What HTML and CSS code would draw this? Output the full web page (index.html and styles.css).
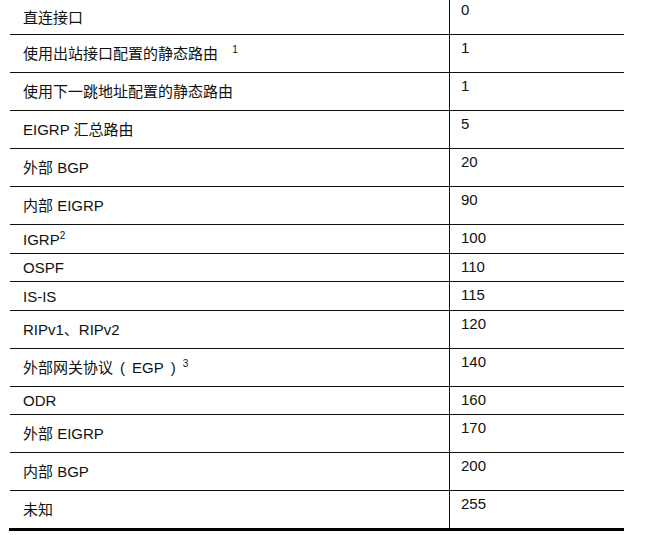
FILE: index.html
```html
<!DOCTYPE html>
<html lang="zh">
<head>
<meta charset="utf-8">
<link rel="stylesheet" href="styles.css">
</head>
<body>
<div class="table">
  <div class="row first"><div class="name">直连接口</div><div class="val">0</div></div>
  <div class="row tall"><div class="name"><span>使用出站接口配置的静态路由 <span class="sup gap">1</span></span></div><div class="val">1</div></div>
  <div class="row tall"><div class="name">使用下一跳地址配置的静态路由</div><div class="val">1</div></div>
  <div class="row tall"><div class="name">EIGRP 汇总路由</div><div class="val">5</div></div>
  <div class="row tall"><div class="name">外部 BGP</div><div class="val">20</div></div>
  <div class="row tall"><div class="name">内部 EIGRP</div><div class="val">90</div></div>
  <div class="row h28"><div class="name"><span>IGRP<span class="sup">2</span></span></div><div class="val">100</div></div>
  <div class="row h27"><div class="name">OSPF</div><div class="val">110</div></div>
  <div class="row h28"><div class="name">IS-IS</div><div class="val">115</div></div>
  <div class="row tall"><div class="name">RIPv1、RIPv2</div><div class="val">120</div></div>
  <div class="row tall"><div class="name"><span>外部网关协议<span class="paren">(</span>EGP<span class="paren">)</span><span class="sup">3</span></span></div><div class="val">140</div></div>
  <div class="row h27"><div class="name">ODR</div><div class="val">160</div></div>
  <div class="row tall"><div class="name">外部 EIGRP</div><div class="val">170</div></div>
  <div class="row tall"><div class="name">内部 BGP</div><div class="val">200</div></div>
  <div class="row tall last"><div class="name">未知</div><div class="val">255</div></div>
</div>
</body>
</html>
```
FILE: styles.css
```css
html, body {
  margin: 0;
  padding: 0;
  background: #fff;
}
body {
  font-family: "Liberation Sans", "Noto Sans CJK SC", sans-serif;
  font-size: 15px;
  color: #111;
}
.table {
  margin-left: 10px;
  width: 614px;
}
.row {
  display: grid;
  grid-template-columns: 439px 1fr;
  border-bottom: 1px solid #111;
}
.row.first { height: 34px; }
.row.tall { height: 37px; }
.row.h28 { height: 28px; }
.row.h27 { height: 27px; }
.row.last {
  border-bottom: 3px solid #000;
  margin-left: -1px;
  padding-left: 1px;
}
.name {
  display: flex;
  align-items: center;
  padding-left: 13px;
  line-height: 17px;
}
.val {
  border-left: 1px solid #111;
  padding: 4px 0 0 11px;
  line-height: 17px;
}
.row.first .val { padding-top: 1px; }
.sup {
  font-size: 10px;
  line-height: 0;
  position: relative;
  top: -6px;
}
.sup.gap { margin-left: 10px; }
.paren { margin: 0 7px; }
```
